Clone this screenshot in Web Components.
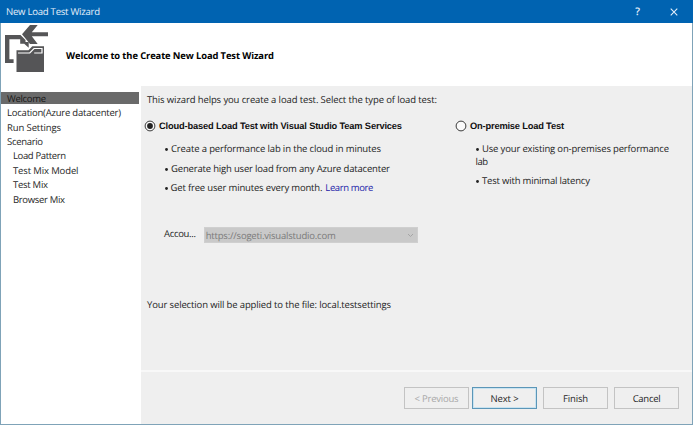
<!DOCTYPE html>
<html lang="en">
<head>
<meta charset="utf-8">
<title>New Load Test Wizard</title>
<style>
html,body{margin:0;width:693px;height:425px;overflow:hidden}
body{font-family:"Open Sans","Noto Sans",sans-serif;font-size:9.5px;line-height:14px;color:#1e1e1e;text-rendering:geometricPrecision}
</style>
</head>
<body>
<load-wizard></load-wizard>
<script>
const define = (name, html, init) => customElements.define(name, class extends HTMLElement {
  connectedCallback() {
    if (this.shadowRoot) return;
    this.attachShadow({ mode: 'open' }).innerHTML = html;
    if (init) init(this, this.shadowRoot);
  }
});

/* A line of text tracked to an exact width given by w. */
define('fit-text', `<style>:host{display:block;white-space:nowrap}span{display:inline-block;white-space:pre}</style><span><slot></slot></span>`,
  (el, root) => {
    const span = root.querySelector('span');
    const n = el.textContent.length;
    span.style.letterSpacing = ((+el.getAttribute('w') - span.getBoundingClientRect().width) / (n - 1)) + 'px';
  });

define('title-bar', `<style>
:host{display:flex;align-items:center;height:23px;background:#0063b1;color:#e4effa;box-sizing:border-box;padding:1px 15px 0 6px}
fit-text{flex:1;font-size:9.6px}
.q{font-size:10.5px;margin-right:30px;font-weight:600}
svg{display:block}
</style><fit-text w="94">New Load Test Wizard</fit-text><span class="q">?</span>
<svg width="8" height="8" viewBox="0 0 9 9"><path d="M.8.8l7.4 7.4M8.2.8L.8 8.2" stroke="#e4effa" stroke-width="1.2"/></svg>`);

define('wizard-header', `<style>
:host{display:flex;height:63px;background:#fff;box-sizing:border-box}
svg{display:block;flex:none;width:65px;height:57px}
fit-text{margin-top:26px;font-weight:700;color:#000;font-size:9.4px}
</style><svg viewBox="1 23 65 57"><g fill="#555557">
<path d="M22 34.3L30 25H37.7L31.8 32.2H48V36.2H31.8L37.7 44H30Z"/>
<path d="M5 35H20.5L25.5 40V42H28.7V47.7L24.2 43.7H20.2V39.3H9.4V59.3H13.6V63H5Z"/>
<path d="M16.5 50.3H28.5L32.3 46.3H44V72H16.5Z"/>
<path d="M18 53H29.8L34 48.5H42V53H34.2" fill="none" stroke="#fff" stroke-width="1.2"/>
<path d="M35.6 49.7H40.2V51.5H35.6Z"/></g></svg>
<fit-text w="208">Welcome to the Create New Load Test Wizard</fit-text>`);

define('nav-item', `<style>
:host{display:block;height:14.4px;line-height:14.4px;padding-left:6px;box-sizing:border-box;color:#262626}
:host([sub]){padding-left:12px}
:host([current]){background:linear-gradient(#6a6a6a 0 12.4px,transparent 12.4px);width:138px;color:#181818}
</style><slot></slot>`);

define('side-nav', `<style>:host{display:block;width:140px;flex:none;background:#fff;padding-top:5.9px;box-sizing:border-box}</style>
<nav-item current><fit-text w="39">Welcome</fit-text></nav-item>
<nav-item><fit-text w="114">Location(Azure datacenter)</fit-text></nav-item>
<nav-item><fit-text w="54">Run Settings</fit-text></nav-item>
<nav-item><fit-text w="36">Scenario</fit-text></nav-item>
<nav-item sub><fit-text w="53">Load Pattern</fit-text></nav-item>
<nav-item sub><fit-text w="65.5">Test Mix Model</fit-text></nav-item>
<nav-item sub><fit-text w="35">Test Mix</fit-text></nav-item>
<nav-item sub><fit-text w="52">Browser Mix</fit-text></nav-item>`);

define('radio-option', `<style>
:host{display:block}
.head{display:flex;align-items:center;gap:3px;height:14px;font:bold 9.3px/14px "Liberation Sans",Arial,sans-serif;color:#111}
svg{display:block}
.dot{display:none}
:host([checked]) .dot{display:block}
</style><div class="head"><svg width="12" height="12" viewBox="0 0 12 12"><circle cx="6" cy="6" r="4.9" fill="#fafafa" stroke="#3a3a3a"/><circle class="dot" cx="6" cy="6" r="2.9" fill="#222"/></svg><slot name="label"></slot></div><slot></slot>`);

define('bullet-line', `<style>
:host{display:flex;height:14px;margin-left:21px}
svg{flex:none;display:block;width:3px;height:14px;margin-right:3px}
</style><svg viewBox="0 0 3 14"><circle cx="1.5" cy="7.5" r="1.4" fill="#222"/></svg><slot></slot>`);

define('account-select', `<style>
:host{display:flex;align-items:center;box-sizing:border-box;width:214px;height:16px;background:#c9c9c9;border:1px solid #cfcfcf;padding:1px 3px 0 1px;color:#7b7b7b;justify-content:space-between}
</style><slot></slot><svg width="7" height="5" viewBox="0 0 7 5"><path d="M1 1l2.5 2.5L6 1" fill="none" stroke="#a5a5a5"/></svg>`);

define('wizard-button', `<style>
:host{display:flex;align-items:center;justify-content:center;box-sizing:border-box;width:65px;height:22px;border:1px solid #c3c3c3;background:#efefef;color:#1e1e1e;padding-top:1px}
:host([disabled]){color:#a8a8a8}
:host([primary]){border-color:#5b96b8;box-shadow:inset 0 0 0 1px #c9e3f0}
</style><slot></slot>`);

define('wizard-page', `<style>
:host{display:flex;flex-direction:column;flex:1;background:#efefef}
.content{height:286px;box-sizing:border-box;padding:6.5px 0 0 6px;border-bottom:2px solid #f8f8f8}
.options{display:flex;margin:12.5px 0 0 -3px}
radio-option{width:311px}
.last{width:auto}
a{color:#2222a8;margin-left:3px}
.account{display:flex;align-items:flex-start;height:16px;gap:8px;margin:32px 0 0 17px}
.file{margin-top:54.5px}
.buttons{display:flex;justify-content:flex-end;padding:15px 13px 0 0}
</style>
<div class="content">
<fit-text w="290">This wizard helps you create a load test. Select the type of load test:</fit-text>
<div class="options">
<radio-option checked><fit-text slot="label" w="243">Cloud-based Load Test with Visual Studio Team Services</fit-text>
<bullet-line style="margin-top:9px"><fit-text w="210">Create a performance lab in the cloud in minutes</fit-text></bullet-line>
<bullet-line style="margin-top:5.5px"><fit-text w="219">Generate high user load from any Azure datacenter</fit-text></bullet-line>
<bullet-line style="margin-top:5.5px;margin-left:20.5px"><fit-text w="152">Get free user minutes every month.</fit-text><a><fit-text w="48">Learn more</fit-text></a></bullet-line>
</radio-option>
<radio-option class="last"><fit-text slot="label" w="94">On-premise Load Test</fit-text>
<bullet-line style="margin-top:9px"><fit-text w="187">Use your existing on-premises performance</fit-text></bullet-line>
<fit-text w="12.5" style="margin:-1px 0 0 20.5px">lab</fit-text>
<bullet-line style="margin-top:5px"><fit-text w="108">Test with minimal latency</fit-text></bullet-line>
</radio-option>
</div>
<div class="account"><fit-text w="32">Accou...</fit-text><account-select><fit-text w="130">https://sogeti.visualstudio.com</fit-text></account-select></div>
<fit-text class="file" w="244">Your selection will be applied to the file: local.testsettings</fit-text>
</div>
<div class="buttons">
<wizard-button disabled><fit-text w="44">&lt; Previous</fit-text></wizard-button>
<wizard-button primary style="margin-left:3px"><fit-text w="28">Next &gt;</fit-text></wizard-button>
<wizard-button style="margin-left:6px"><fit-text w="25">Finish</fit-text></wizard-button>
<wizard-button style="margin-left:6px"><fit-text w="28">Cancel</fit-text></wizard-button>
</div>`);

define('load-wizard', `<style>
:host{display:flex;flex-direction:column;width:693px;height:425px;box-sizing:border-box;background:#fff}
.frame{flex:1;display:flex;flex-direction:column;border:solid #7fa3b8;border-width:0 1px 1px}
.body{flex:1;display:flex}
</style><title-bar></title-bar><div class="frame"><wizard-header></wizard-header><div class="body"><side-nav></side-nav><wizard-page></wizard-page></div></div>`);
</script>
</body>
</html>
